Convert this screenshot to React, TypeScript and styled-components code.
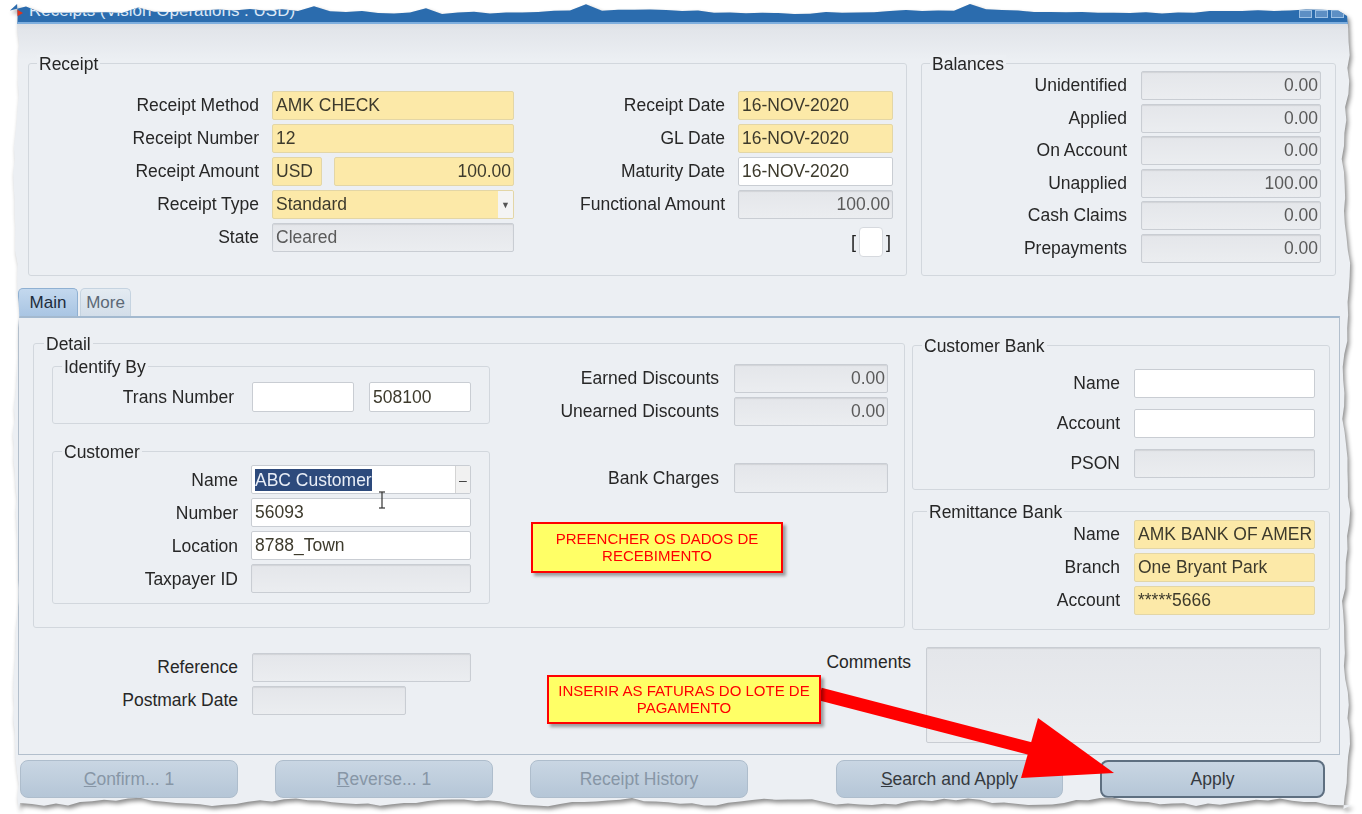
import React from 'react';
import styled, { createGlobalStyle } from 'styled-components';

const GlobalStyle = createGlobalStyle`
  html, body { margin: 0; padding: 0; background: #ffffff; }
  body {
    width: 1362px; height: 814px; overflow: hidden;
    font-family: "Liberation Sans", Arial, Helvetica, sans-serif;
  }
`;

const WIN_W = 1342;
const WIN_H = 810;

function seeded(seed: number) {
  let s = seed;
  return () => {
    s = (s * 16807) % 2147483647;
    return (s - 1) / 2147483646;
  };
}

function tornPolygon(): string {
  const r = seeded(11);
  const pts: string[] = [];
  for (let x = 0; x <= WIN_W; x += 16) {
    let y = 11.5 + 1.5 * Math.sin(x / 55) + (r() * 2 - 1);
    if (r() < 0.1) y -= 5;
    pts.push(`${x}px ${Math.max(4, y).toFixed(1)}px`);
  }
  for (let y = 16; y <= WIN_H; y += 13) {
    const x = WIN_W - 6 + 3 * Math.sin(y / 36) + (r() * 3 - 1.5);
    pts.push(`${x.toFixed(1)}px ${y}px`);
  }
  for (let x = WIN_W; x >= 0; x -= 12) {
    const y = WIN_H - 8 + 3 * Math.sin(x / 26) + (r() * 3 - 1.5);
    pts.push(`${x}px ${y.toFixed(1)}px`);
  }
  for (let y = WIN_H; y >= 0; y -= 13) {
    const x = 5 + 2.5 * Math.sin(y / 40) + r() * 2;
    pts.push(`${x.toFixed(1)}px ${y}px`);
  }
  return `polygon(${pts.join(', ')})`;
}

const TORN = tornPolygon();

const Page = styled.div`
  position: relative;
  width: 1362px;
  height: 814px;
  background: #ffffff;
  overflow: hidden;
`;

const Shadow = styled.div`
  margin-left: 10px;
  width: ${WIN_W}px;
  filter: drop-shadow(2px 3px 2px rgba(0, 0, 0, 0.45));
`;

const Window = styled.div`
  width: ${WIN_W}px;
  height: ${WIN_H}px;
  clip-path: ${TORN};
  background: linear-gradient(#dcdfe4 0px, #dcdfe4 24px, #e2e5ea 30px, #eceff3 60px, #eceff3 100%);
  display: flex;
  flex-direction: column;
  color: #262626;
  font-size: 17.5px;
`;

const TitleBar = styled.div`
  height: 24px;
  flex: none;
  background: #2b6cae;
  border-bottom: 2px solid #7eaede;
  box-sizing: border-box;
  display: flex;
  align-items: center;
  padding-left: 4px;
  color: #ffffff;
  font-size: 17px;
  position: relative;
`;

const TitleIcon = styled.span`
  width: 0;
  height: 0;
  border-left: 7px solid #e0341c;
  border-top: 4px solid transparent;
  border-bottom: 4px solid transparent;
  margin: 4px 6px 0 2px;
`;

const TitleText = styled.span`
  margin-top: 0px;
  color: #dbe8f6;
  line-height: 18px;
`;

const WinButtons = styled.div`
  margin-left: auto;
  margin-right: 8px;
  margin-top: 6px;
  display: flex;
  gap: 3px;
`;

const WinBtn = styled.span`
  width: 11px;
  height: 6px;
  background: #5d8fc4;
  border: 1px solid #9cc0e4;
`;

const TopSection = styled.div`
  display: flex;
  gap: 14px;
  margin: 39px 0 0 18px;
`;

const Group = styled.div<{ $w: number; $h: number; $mt?: number }>`
  position: relative;
  box-sizing: border-box;
  width: ${(p) => p.$w}px;
  height: ${(p) => p.$h}px;
  margin-top: ${(p) => p.$mt ?? 0}px;
  border: 1px solid #d2d7dd;
  border-radius: 3px;
  flex: none;
`;

const GroupTitle = styled.span<{ $left?: number }>`
  position: absolute;
  top: -9px;
  left: ${(p) => p.$left ?? 8}px;
  padding: 0 2px;
  background: #eceff3;
  line-height: 18px;
  white-space: nowrap;
`;

const ReceiptGrid = styled.div`
  display: grid;
  grid-template-columns: 230px 242px 198px 155px;
  grid-auto-rows: 29px;
  column-gap: 13px;
  row-gap: 4px;
  padding-top: 27px;
`;

const BalanceGrid = styled.div`
  display: grid;
  grid-template-columns: 205px 180px;
  grid-auto-rows: 29px;
  column-gap: 14px;
  row-gap: 3.6px;
  padding-top: 7px;
`;

const Label = styled.span`
  text-align: right;
  white-space: nowrap;
  align-self: center;
  color: #272727;
`;

type Variant = 'req' | 'ro' | 'white';

const Field = styled.div<{ $v: Variant; $right?: boolean; $w?: number; $h?: number }>`
  box-sizing: border-box;
  height: ${(p) => p.$h ?? 29}px;
  width: ${(p) => (p.$w ? `${p.$w}px` : 'auto')};
  border: 1px solid ${(p) => (p.$v === 'req' ? '#e3d6a6' : '#c9cdd3')};
  border-radius: 2px;
  background: ${(p) =>
    p.$v === 'req' ? '#fce9a8' : p.$v === 'ro' ? 'linear-gradient(#e4e6ea, #ebedf0)' : '#ffffff'};
  box-shadow: ${(p) => (p.$v === 'ro' ? 'inset 0 1px 1px rgba(0,0,0,0.08)' : 'none')};
  display: flex;
  align-items: center;
  justify-content: ${(p) => (p.$right ? 'flex-end' : 'flex-start')};
  padding: 0 2px 0 3px;
  font-size: 17.5px;
  color: ${(p) => (p.$v === 'ro' ? '#5a5a5a' : '#3d3a2c')};
  white-space: nowrap;
  overflow: hidden;
  position: relative;
`;

const Pair = styled.div`
  display: flex;
  gap: 12px;
`;

const DropCap = styled.span`
  margin-left: auto;
  align-self: stretch;
  width: 15px;
  margin-right: -2px;
  background: #f4f4f4;
  display: flex;
  align-items: center;
  justify-content: center;
  font-size: 9px;
  color: #555;
`;

const CheckCell = styled.div`
  display: flex;
  justify-content: flex-end;
  align-items: center;
  gap: 3px;
  margin-top: 9px;
  padding-right: 2px;
  font-size: 18px;
  color: #222;
`;

const CheckBox = styled.span`
  width: 24px;
  height: 30px;
  box-sizing: border-box;
  background: #ffffff;
  border: 1px solid #d6d9de;
  border-radius: 4px;
`;

const TabRow = styled.div`
  display: flex;
  gap: 2px;
  margin: 12px 0 0 8px;
  height: 28px;
`;

const Tab = styled.div<{ $active?: boolean }>`
  box-sizing: border-box;
  width: ${(p) => (p.$active ? 60 : 51)}px;
  height: 28px;
  border-radius: 5px 5px 0 0;
  border: 1px solid ${(p) => (p.$active ? '#8fb0d2' : '#c5d3e0')};
  border-bottom: none;
  background: ${(p) => (p.$active ? 'linear-gradient(#c3d8ee, #a9c5e3)' : 'linear-gradient(#e4ebf2, #d3dee9)')};
  color: ${(p) => (p.$active ? '#1d2b3a' : '#5b6876')};
  display: flex;
  align-items: center;
  justify-content: center;
  font-size: 17px;
`;

const Panel = styled.div`
  box-sizing: border-box;
  margin-left: 8px;
  width: 1322px;
  height: 439px;
  border: 1px solid #b3bfcc;
  border-top: 2px solid #a3b9cf;
  background: #eceff3;
  padding: 25px 9px 0 14px;
  display: flex;
  flex-direction: column;
`;

const UpperRow = styled.div`
  display: flex;
  gap: 7px;
`;

const DetailInner = styled.div`
  display: flex;
  padding: 21px 16px 0 18px;
`;

const LeftCol = styled.div`
  display: flex;
  flex-direction: column;
  width: 438px;
  flex: none;
`;

const IdentifyRow = styled.div`
  display: flex;
  align-items: center;
  gap: 15px;
  padding-top: 15px;
`;

const IdentLabel = styled(Label)`
  width: 181px;
  margin-right: 3px;
`;

const CustomerGrid = styled.div`
  display: grid;
  grid-template-columns: 185px 220px;
  grid-auto-rows: 30px;
  column-gap: 13px;
  row-gap: 3px;
  padding-top: 13px;
`;

const MidGrid = styled.div`
  flex: 1;
  display: grid;
  grid-template-columns: 1fr 154px;
  grid-template-rows: 29px 29px 29px 30px;
  column-gap: 15px;
  row-gap: 4px;
  align-content: start;
  margin-top: -1px;
`;

const RightCol = styled.div`
  display: flex;
  flex-direction: column;
`;

const BankGrid = styled.div<{ $pt: number; $gap: number }>`
  display: grid;
  grid-template-columns: 1fr 181px;
  grid-auto-rows: 29px;
  column-gap: 14px;
  row-gap: ${(p) => p.$gap}px;
  padding: ${(p) => p.$pt}px 14px 0 0;
`;

const Selected = styled.span`
  background: #2d4a7c;
  color: #e9eef7;
  padding: 1px 0;
  line-height: 20px;
`;

const NameDrop = styled.span`
  margin-left: auto;
  align-self: stretch;
  width: 14px;
  margin-right: -2px;
  background: #f1f1f1;
  border-left: 1px solid #d4d4d4;
  display: flex;
  align-items: center;
  justify-content: center;
  font-size: 14px;
  color: #444;
`;

const BottomArea = styled.div`
  display: flex;
  margin-top: 17px;
`;

const RefGrid = styled.div`
  display: grid;
  grid-template-columns: 204px 219px;
  grid-auto-rows: 29px;
  column-gap: 14px;
  row-gap: 4px;
  margin-top: 6px;
  align-content: start;
  padding-left: 1px;
`;

const CommentsBlock = styled.div`
  margin-left: auto;
  margin-right: 9px;
  display: flex;
  gap: 15px;
`;

const CommentsLabel = styled.span`
  margin-top: 5px;
`;

const ButtonBar = styled.div`
  display: flex;
  gap: 37px;
  margin: 5px 0 0 10px;
`;

const Spacer = styled.div<{ $w: number }>`
  width: ${(p) => p.$w}px;
  margin-left: -37px;
`;

const Button = styled.div<{ $w: number; $disabled?: boolean; $default?: boolean }>`
  box-sizing: border-box;
  width: ${(p) => p.$w}px;
  height: 38px;
  border-radius: 8px;
  border: ${(p) => (p.$default ? '2px solid #5e6f80' : '1px solid #aebdcc')};
  background: linear-gradient(#c9d6e3, #b5c6d7);
  color: ${(p) => (p.$disabled ? '#8796a6' : '#353a40')};
  display: flex;
  align-items: center;
  justify-content: center;
  font-size: 17.5px;
  white-space: nowrap;
`;

const Note = styled.div<{ $x: number; $y: number; $w: number; $h: number }>`
  position: absolute;
  left: ${(p) => p.$x}px;
  top: ${(p) => p.$y}px;
  width: ${(p) => p.$w}px;
  height: ${(p) => p.$h}px;
  box-sizing: border-box;
  background: #ffff66;
  border: 2px solid #ff0000;
  box-shadow: 3px 3px 3px rgba(0, 0, 0, 0.35);
  color: #ff0000;
  font-size: 15px;
  line-height: 17px;
  text-align: center;
  display: flex;
  align-items: center;
  justify-content: center;
  padding-bottom: 2px;
`;

const Overlay = styled.svg`
  position: absolute;
  left: 0;
  top: 0;
  pointer-events: none;
`;

export default function App() {
  return (
    <Page>
      <GlobalStyle />
      <Shadow>
        <Window>
          <TitleBar>
            <TitleIcon />
            <TitleText>Receipts (Vision Operations : USD)</TitleText>
            <WinButtons>
              <WinBtn />
              <WinBtn />
              <WinBtn />
            </WinButtons>
          </TitleBar>

          <TopSection>
            <Group $w={879} $h={213}>
              <GroupTitle>Receipt</GroupTitle>
              <ReceiptGrid>
                <Label>Receipt Method</Label>
                <Field $v="req">AMK CHECK</Field>
                <Label>Receipt Date</Label>
                <Field $v="req">16-NOV-2020</Field>

                <Label>Receipt Number</Label>
                <Field $v="req">12</Field>
                <Label>GL Date</Label>
                <Field $v="req">16-NOV-2020</Field>

                <Label>Receipt Amount</Label>
                <Pair>
                  <Field $v="req" $w={50}>USD</Field>
                  <Field $v="req" $w={180} $right>100.00</Field>
                </Pair>
                <Label>Maturity Date</Label>
                <Field $v="white">16-NOV-2020</Field>

                <Label>Receipt Type</Label>
                <Field $v="req">
                  Standard
                  <DropCap>▼</DropCap>
                </Field>
                <Label>Functional Amount</Label>
                <Field $v="ro" $right>100.00</Field>

                <Label>State</Label>
                <Field $v="ro">Cleared</Field>
                <span />
                <CheckCell>
                  [<CheckBox />]
                </CheckCell>
              </ReceiptGrid>
            </Group>

            <Group $w={415} $h={213}>
              <GroupTitle>Balances</GroupTitle>
              <BalanceGrid>
                <Label>Unidentified</Label>
                <Field $v="ro" $right>0.00</Field>
                <Label>Applied</Label>
                <Field $v="ro" $right>0.00</Field>
                <Label>On Account</Label>
                <Field $v="ro" $right>0.00</Field>
                <Label>Unapplied</Label>
                <Field $v="ro" $right>100.00</Field>
                <Label>Cash Claims</Label>
                <Field $v="ro" $right>0.00</Field>
                <Label>Prepayments</Label>
                <Field $v="ro" $right>0.00</Field>
              </BalanceGrid>
            </Group>
          </TopSection>

          <TabRow>
            <Tab $active>Main</Tab>
            <Tab>More</Tab>
          </TabRow>

          <Panel>
            <UpperRow>
              <Group $w={872} $h={285}>
                <GroupTitle $left={10}>Detail</GroupTitle>
                <DetailInner>
                  <LeftCol>
                    <Group $w={438} $h={58} $mt={1}>
                      <GroupTitle $left={9}>Identify By</GroupTitle>
                      <IdentifyRow>
                        <IdentLabel>Trans Number</IdentLabel>
                        <Field $v="white" $w={102} $h={30} />
                        <Field $v="white" $w={102} $h={30}>
                          508100
                        </Field>
                      </IdentifyRow>
                    </Group>
                    <Group $w={438} $h={153} $mt={27}>
                      <GroupTitle $left={9}>Customer</GroupTitle>
                      <CustomerGrid>
                        <Label>Name</Label>
                        <Field $v="white">
                          <Selected>ABC Customer</Selected>
                          <NameDrop>–</NameDrop>
                        </Field>
                        <Label>Number</Label>
                        <Field $v="white">56093</Field>
                        <Label>Location</Label>
                        <Field $v="white">8788_Town</Field>
                        <Label>Taxpayer ID</Label>
                        <Field $v="ro" />
                      </CustomerGrid>
                    </Group>
                  </LeftCol>
                  <MidGrid>
                    <Label>Earned Discounts</Label>
                    <Field $v="ro" $right>0.00</Field>
                    <Label>Unearned Discounts</Label>
                    <Field $v="ro" $right>0.00</Field>
                    <span />
                    <span />
                    <Label>Bank Charges</Label>
                    <Field $v="ro" $h={30} />
                  </MidGrid>
                </DetailInner>
              </Group>

              <RightCol>
                <Group $w={418} $h={145} $mt={2}>
                  <GroupTitle $left={9}>Customer Bank</GroupTitle>
                  <BankGrid $pt={23} $gap={11}>
                    <Label>Name</Label>
                    <Field $v="white" />
                    <Label>Account</Label>
                    <Field $v="white" />
                    <Label>PSON</Label>
                    <Field $v="ro" />
                  </BankGrid>
                </Group>
                <Group $w={418} $h={119} $mt={21}>
                  <GroupTitle $left={14}>Remittance Bank</GroupTitle>
                  <BankGrid $pt={8} $gap={4}>
                    <Label>Name</Label>
                    <Field $v="req">AMK BANK OF AMER</Field>
                    <Label>Branch</Label>
                    <Field $v="req">One Bryant Park</Field>
                    <Label>Account</Label>
                    <Field $v="req">*****5666</Field>
                  </BankGrid>
                </Group>
              </RightCol>
            </UpperRow>

            <BottomArea>
              <RefGrid>
                <Label>Reference</Label>
                <Field $v="ro" />
                <Label>Postmark Date</Label>
                <Field $v="ro" $w={154} />
              </RefGrid>
              <CommentsBlock>
                <CommentsLabel>Comments</CommentsLabel>
                <Field $v="ro" $w={395} $h={96} />
              </CommentsBlock>
            </BottomArea>
          </Panel>

          <ButtonBar>
            <Button $w={218} $disabled>
              <u>C</u>onfirm... 1
            </Button>
            <Button $w={218} $disabled>
              <u>R</u>everse... 1
            </Button>
            <Button $w={218} $disabled>
              Receipt History
            </Button>
            <Spacer $w={51} />
            <Button $w={227}>
              <u>S</u>earch and Apply
            </Button>
            <Button $w={225} $default>
              Apply
            </Button>
          </ButtonBar>
        </Window>
      </Shadow>

      <Overlay width={1362} height={814} viewBox="0 0 1362 814">
        <g stroke="#333" strokeWidth={1.2} fill="none">
          <line x1={382} y1={492} x2={382} y2={508} />
          <line x1={379} y1={492} x2={385} y2={492} />
          <line x1={379} y1={508} x2={385} y2={508} />
        </g>
        <line x1={820} y1={694} x2={1032} y2={749} stroke="#ff0000" strokeWidth={13} />
        <polygon points="1038,718 1021,778 1114,773" fill="#ff0000" />
      </Overlay>

      <Note $x={531} $y={522} $w={252} $h={51}>
        PREENCHER OS DADOS DE
        <br />
        RECEBIMENTO
      </Note>
      <Note $x={547} $y={675} $w={274} $h={49}>
        INSERIR AS FATURAS DO LOTE DE
        <br />
        PAGAMENTO
      </Note>
    </Page>
  );
}
